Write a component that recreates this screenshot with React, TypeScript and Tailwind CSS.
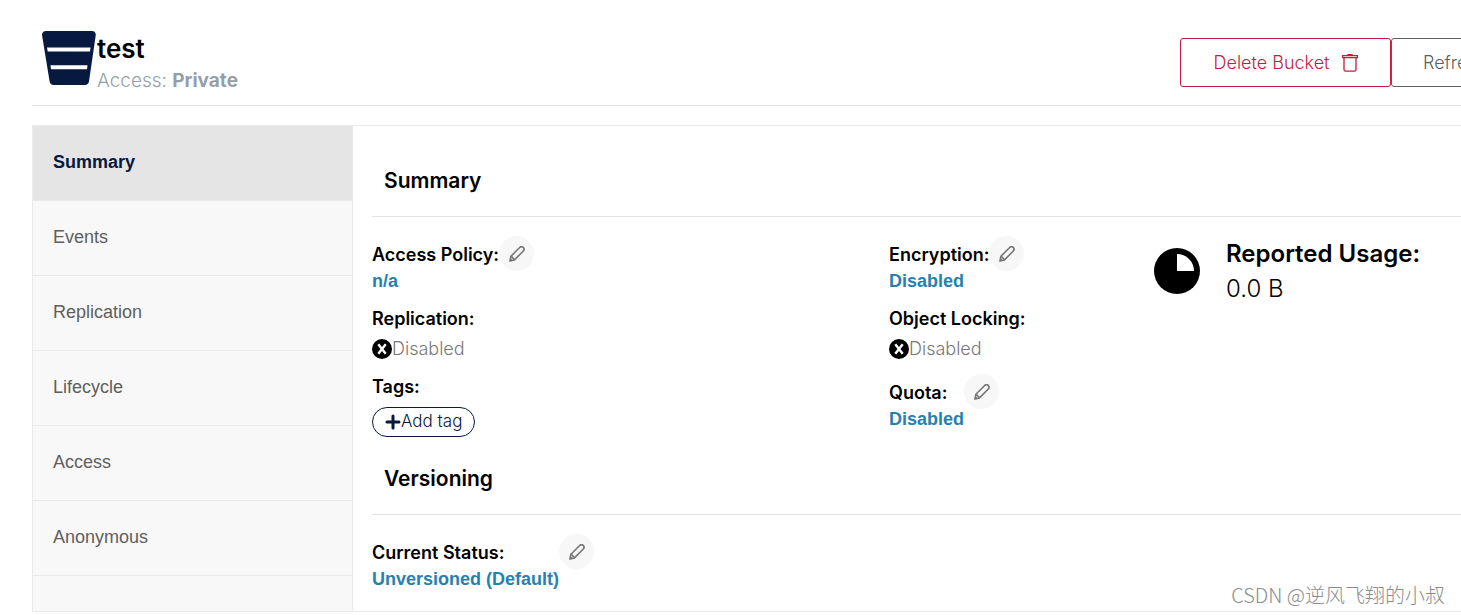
import React from 'react';

interface EditableFieldProps {
  label: string;
  value: string;
}

const BucketIcon: React.FC = () => (
  <svg className="h-[54px] w-[54px] shrink-0" viewBox="0 0 54 54" fill="#07193E" aria-hidden="true">
    <path d="M4 0H50C52.600 0 54.100 2 53.700 4.500L47 50.500C46.700 52.700 45 54 43 54H11.500C9.500 54 8 52.800 7.600 50.600L.1 4.500C-.3 2 1.400 0 4 0Z" />
    <path fill="#fff" d="M5 16.500H48.500L48 20.500H5.700ZM8.500 34.300H45.500L45 38.300H9Z" />
  </svg>
);

const TrashIcon: React.FC = () => (
  <svg className="h-[18px] w-4" viewBox="0 0 16 18" fill="none" stroke="currentColor" aria-hidden="true">
    <path d="M5 1.500C5 .8 5.500.5 6 .5H10C10.500.5 11 .8 11 1.500" />
    <path d="M.6 1.700H15.400V3.700H.6Z" strokeWidth="1.200" />
    <path d="M2 3.700V15.500C2 16.500 2.700 17.200 3.700 17.200H12.300C13.300 17.200 14 16.500 14 15.500V3.700" strokeWidth="1.300" />
  </svg>
);

const PencilIcon: React.FC = () => (
  <svg
    className="h-4 w-4"
    viewBox="0 0 16 16"
    fill="none"
    stroke="currentColor"
    strokeWidth="1.600"
    strokeLinejoin="round"
    aria-hidden="true"
  >
    <path d="M.9 15.100L1.900 10.300L10.700 1.500C11.700.5 13.200.5 14.200 1.400C15.200 2.400 15.300 4 14.300 5L5.500 13.900Z" />
    <path d="M2.300 10.400L5.300 13.500M1.300 13L3 14.600" />
  </svg>
);

const DisabledIcon: React.FC = () => (
  <svg className="h-5 w-5" viewBox="0 0 20 20" aria-hidden="true">
    <circle cx="10" cy="10" r="10" />
    <path d="M6.300 5.200L13.700 14.800M13.700 5.200L6.300 14.800" stroke="#fff" strokeWidth="2.400" />
  </svg>
);

const PlusIcon: React.FC = () => (
  <svg className="h-4 w-4" viewBox="0 0 16 16" stroke="#07193E" strokeWidth="3" strokeLinecap="round" aria-hidden="true">
    <path d="M8 2V14M2 8H14" />
  </svg>
);

const UsageIcon: React.FC = () => (
  <svg className="h-[46px] w-[46px] shrink-0" viewBox="0 0 46 46" aria-hidden="true">
    <circle cx="23" cy="23" r="23" />
    <path d="M23 6A17 17 0 0 1 40 23H23Z" fill="#fff" />
  </svg>
);

const SectionTitle: React.FC<{ children: React.ReactNode }> = ({ children }) => (
  <h2 className="flex h-[73px] items-center border-b border-[#e2e2e2] px-3 pt-px text-[21px] font-semibold">{children}</h2>
);

const EditableField: React.FC<EditableFieldProps> = ({ label, value }) => (
  <div className="flex items-start">
    <div>
      <div className="flex h-[35px] items-center pt-[2px] text-[18px] font-semibold">{label}</div>
      <a href="#" className="block font-['Liberation_Sans',Arial,sans-serif] text-[18px] leading-5 font-bold text-[#2781b0]">
        {value}
      </a>
    </div>
    <button
      type="button"
      aria-label={`Edit ${label}`}
      className="flex h-[35px] w-[35px] items-center justify-center rounded-full bg-[#f7f7f7] text-[#767676]"
    >
      <PencilIcon />
    </button>
  </div>
);

const DisabledField: React.FC<{ label: string }> = ({ label }) => (
  <div className="mt-4">
    <div className="text-[18px] leading-6 font-semibold">{label}</div>
    <div className="mt-[6px] flex items-center text-[18px] leading-6 font-light text-[#777]">
      <DisabledIcon />
      Disabled
    </div>
  </div>
);

const menuItems = ['Summary', 'Events', 'Replication', 'Lifecycle', 'Access', 'Anonymous'];

const App: React.FC = () => {
  return (
    <div className="relative overflow-hidden bg-white pb-[3px] pl-8 font-[Inter,sans-serif] text-black">
      <header className="flex h-[106px] items-start border-b border-[#e2e2e2] pt-[31px]">
        <div className="flex min-w-0 flex-1 items-start pl-[10px]">
          <BucketIcon />
          <div className="pl-px">
            <h1 className="text-[26px] leading-9 font-semibold">test</h1>
            <p className="text-[19px] leading-7 font-light text-[#969fa8]">
              Access: <span className="font-bold">Private</span>
            </p>
          </div>
        </div>
        <div className="mt-[7px] flex w-[281px] shrink-0 overflow-hidden text-[18px] font-light whitespace-nowrap">
          <button
            type="button"
            className="flex h-[49px] w-[211px] shrink-0 items-center justify-center gap-3 rounded-[3px] border border-[#c51b3f] text-[#c51b3f]"
          >
            Delete Bucket
            <TrashIcon />
          </button>
          <button
            type="button"
            className="h-[49px] shrink-0 rounded-[3px] border border-[#5e5e5e] px-[31px] text-[#5e5e5e]"
          >
            Refresh
          </button>
        </div>
      </header>

      <div className="mt-[19px] flex border-y border-l border-[#eaeaea]">
        <nav className="w-[320px] shrink-0 border-r border-[#eaeaea] bg-[#f8f8f8] font-['Liberation_Sans',Arial,sans-serif] text-[18px]">
          {menuItems.map((item, index) => (
            <a
              key={item}
              href="#"
              className={
                index === 0
                  ? 'flex h-[75px] items-center border-b border-[#eaeaea] bg-[#e5e5e5] px-5 pb-[2px] font-bold text-[#07193e]'
                  : 'flex h-[75px] items-center border-b border-[#eaeaea] px-5 pb-[2px] text-[#5e5e5e]'
              }
            >
              {item}
            </a>
          ))}
        </nav>

        <main className="min-w-0 flex-1 pt-[18px] pb-[22px] pl-[19px]">
          <SectionTitle>Summary</SectionTitle>
          <div className="mt-[19px] grid grid-cols-[1fr_265px_307px]">
            <div>
              <EditableField label="Access Policy:" value="n/a" />
              <DisabledField label="Replication:" />
              <div className="mt-[14px] text-[18px] leading-6 font-semibold">Tags:</div>
              <button
                type="button"
                className="mt-2 flex h-[30px] items-center rounded-full border border-[#07193e] px-3 text-[17px] font-light text-[#07193e]"
              >
                <PlusIcon />
                Add tag
              </button>
            </div>
            <div>
              <EditableField label="Encryption:" value="Disabled" />
              <DisabledField label="Object Locking:" />
              <div className="mt-[13px]">
                <EditableField label="Quota:" value="Disabled" />
              </div>
            </div>
            <div className="flex items-start gap-[26px] whitespace-nowrap">
              <div className="pt-3">
                <UsageIcon />
              </div>
              <div>
                <div className="text-2xl leading-9 font-semibold">Reported Usage:</div>
                <div className="text-2xl leading-[34px] font-light">0.0 B</div>
              </div>
            </div>
          </div>

          <div className="mt-[5px]">
            <SectionTitle>Versioning</SectionTitle>
          </div>
          <div className="mt-[19px]">
            <EditableField label="Current Status:" value="Unversioned (Default)" />
          </div>
        </main>
      </div>

      <div className="pointer-events-none absolute right-4 bottom-[6px] font-['Noto_Sans_CJK_SC',sans-serif] text-[20px] leading-7 font-light text-[#8c8c8c]">
        CSDN @逆风飞翔的小叔
      </div>
    </div>
  );
};

export default App;
